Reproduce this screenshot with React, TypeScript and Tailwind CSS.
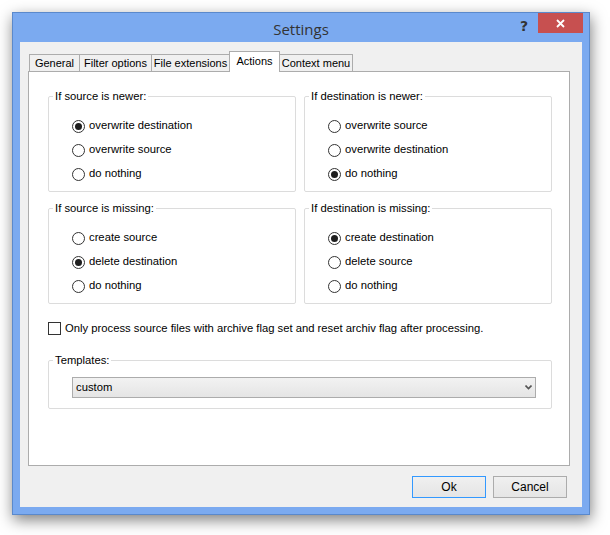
import React from 'react';

// Windows 8 style "Settings" dialog, Actions tab selected

const Radio: React.FC<{ label: string; checked?: boolean }> = ({ label, checked }) => (
  <div className="flex items-center h-[16px]">
    <span className="w-[13px] h-[13px] rounded-full border border-[#333333] bg-white flex items-center justify-center shrink-0">
      {checked && <span className="w-[7px] h-[7px] rounded-full bg-[#1e1e1e]" />}
    </span>
    <span className="ml-[4px] leading-none">{label}</span>
  </div>
);

const Group: React.FC<{ title: string; items: string[]; selected: number }> = ({ title, items, selected }) => (
  <fieldset className="border border-[#dcdcdc] rounded-[2px]">
    <legend className="ml-[4px] px-[2px] h-[14px] leading-[14px]">{title}</legend>
    <div className="flex flex-col gap-[8px] pl-[23px] pt-[15px] pb-[9px]">
      {items.map((it, i) => (
        <Radio key={it} label={it} checked={i === selected} />
      ))}
    </div>
  </fieldset>
);

const tabs = [
  { name: 'General', w: 'w-[51px]' },
  { name: 'Filter options', w: 'w-[73px]' },
  { name: 'File extensions', w: 'w-[79px]' },
  { name: 'Actions', w: 'w-[51px]', active: true },
  { name: 'Context menu', w: 'w-[74px]' },
];

export default function App() {
  return (
    <div className="w-[610px] h-[535px] bg-white pt-[12px] pl-[12px] font-['Liberation_Sans',Arial,sans-serif] text-[11.25px] text-black">
      <div className="w-[578px] h-[503px] bg-[#7baaf0] border border-[#5a89cc] flex flex-col shadow-[1px_5px_14px_rgba(0,0,0,0.5)]">
        {/* title bar */}
        <div className="h-[29px] flex shrink-0">
          <div className="flex-1" />
          <div className="pt-[5px] text-[15px] text-[#333333] font-['Open_Sans','Liberation_Sans',sans-serif]">Settings</div>
          <div className="flex-1 flex justify-end items-start">
            <span className="mt-[3px] mr-[10px] text-[14px] font-bold text-[#333333] font-['DejaVu_Sans',sans-serif]">?</span>
            <button className="w-[45px] h-[20px] bg-[#c75050] mr-[6px] flex items-center justify-center">
              <svg width="9" height="9" viewBox="0 0 9 9">
                <path d="M1 1L8 8M8 1L1 8" stroke="#ffffff" strokeWidth="1.8" />
              </svg>
            </button>
          </div>
        </div>

        {/* client */}
        <div className="flex-1 mx-[7px] mb-[7px] bg-[#f0f0f0] flex flex-col pt-[9px]">
          <div className="flex items-end h-[20px] pl-[9px] text-[11px]">
            {tabs.map((t, i) =>
              t.active ? (
                <div
                  key={t.name}
                  className={`${t.w} h-[21px] -mb-px -ml-px relative z-10 bg-white border border-b-0 border-[#acacac] flex items-center justify-center pb-[2px]`}
                >
                  {t.name}
                </div>
              ) : (
                <div
                  key={t.name}
                  className={`${t.w} h-[17px] ${i > 0 ? '-ml-px' : ''} bg-[#f0f0f0] border border-b-0 border-[#acacac] flex items-center justify-center`}
                >
                  {t.name}
                </div>
              )
            )}
          </div>

          <div className="ml-[8px] w-[542px] h-[395px] bg-white border border-[#acacac] pt-[17px] pl-[19px]">
            <div className="grid grid-cols-[248px_248px] gap-x-[8px] gap-y-[9px]">
              <Group
                title="If source is newer:"
                items={['overwrite destination', 'overwrite source', 'do nothing']}
                selected={0}
              />
              <Group
                title="If destination is newer:"
                items={['overwrite source', 'overwrite destination', 'do nothing']}
                selected={2}
              />
              <Group
                title="If source is missing:"
                items={['create source', 'delete destination', 'do nothing']}
                selected={1}
              />
              <Group
                title="If destination is missing:"
                items={['create destination', 'delete source', 'do nothing']}
                selected={0}
              />
            </div>

            <div className="flex items-center h-[16px] mt-[16px]">
              <span className="w-[13px] h-[13px] border border-[#333333] bg-white shrink-0" />
              <span className="ml-[4px]">
                Only process source files with archive flag set and reset archiv flag after processing.
              </span>
            </div>

            <fieldset className="mt-[17px] w-[504px] border border-[#dcdcdc] rounded-[2px]">
              <legend className="ml-[4px] px-[2px] h-[14px] leading-[14px]">Templates:</legend>
              <div className="pl-[23px] pr-[15px] pt-[10px] pb-[10px]">
                <div className="h-[21px] border border-[#acacac] bg-gradient-to-b from-[#f2f2f2] to-[#e5e5e5] flex items-center justify-between pl-[3px] pr-[3px]">
                  <span>custom</span>
                  <svg width="7" height="5" viewBox="0 0 7 5">
                    <path d="M0.5 0.5L3.5 3.5L6.5 0.5" stroke="#555555" strokeWidth="1.6" fill="none" />
                  </svg>
                </div>
              </div>
            </fieldset>
          </div>

          <div className="flex justify-end gap-[7px] mt-[10px] pr-[15px]">
            <button className="w-[74px] h-[22px] border border-[#3399ff] bg-gradient-to-b from-[#f0f0f0] to-[#e5e5e5] text-[12px]">
              Ok
            </button>
            <button className="w-[74px] h-[22px] border border-[#acacac] bg-gradient-to-b from-[#f0f0f0] to-[#e5e5e5] text-[12px]">
              Cancel
            </button>
          </div>
        </div>
      </div>
    </div>
  );
}
